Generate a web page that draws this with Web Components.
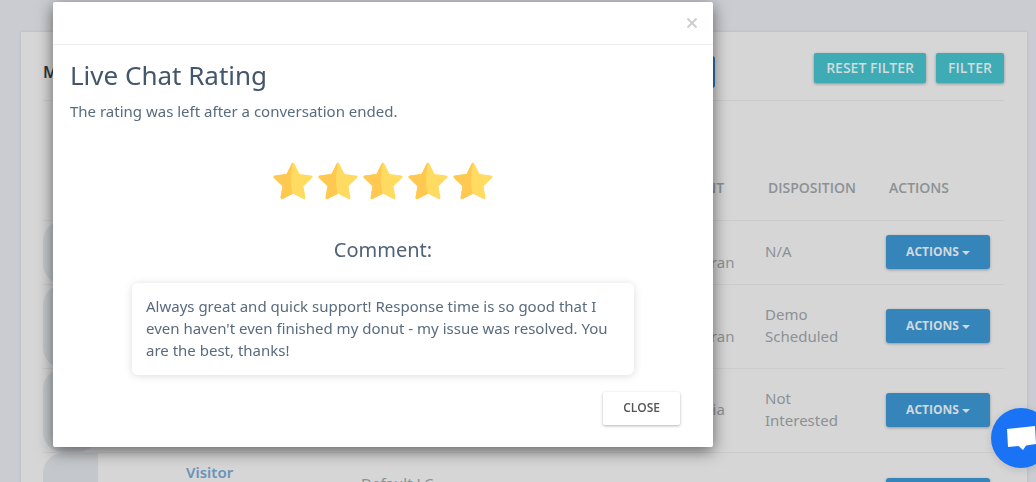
<!DOCTYPE html>
<html lang="en">
<head>
<meta charset="utf-8">
<title>Live Chat Rating</title>
<style>
body { margin: 0; min-height: 100vh; background: #cbccd1; color: #8b9195; overflow: hidden;
  font: 15px/22px "Noto Sans", "Open Sans", sans-serif; }
</style>
</head>
<body>
<conversations-page></conversations-page>
<rating-dialog heading="Live Chat Rating">
  The rating was left after a conversation ended.
  <star-rating slot="stars" value="5"></star-rating>
  <comment-card slot="comment">Always great and quick support! Response time is so good that I even haven't even finished my donut - my issue was resolved. You are the best, thanks!</comment-card>
</rating-dialog>
<chat-launcher></chat-launcher>

<script>
const define = (name, html) => customElements.define(name, class extends HTMLElement {
  connectedCallback() {
    if (this.shadowRoot) return;
    const root = this.attachShadow({ mode: "open" });
    root.innerHTML = typeof html === "function" ? html(this) : html;
  }
});

define("filter-button", `
<style>
:host { display: block; }
button { display: block; border: 0; border-radius: 2px; padding: 4px 12px; background: #3eabb5; color: #d0dcdd;
  font: 600 14px/22px "Open Sans", sans-serif; box-shadow: 0 1px 3px rgba(0,0,0,.35); }
</style>
<button type="button"><slot></slot></button>`);

define("actions-button", `
<style>
:host { display: block; }
button { display: flex; align-items: center; justify-content: center; gap: 3px; width: 104px; height: 34px; border: 0;
  border-radius: 3px; padding: 0; background: #3584ba; color: #d0d9df;
  font: 700 12px/22px "Open Sans", sans-serif; box-shadow: 0 1px 3px rgba(0,0,0,.3); }
i { border: 4px solid transparent; border-top-color: currentColor; border-bottom: 0; margin-top: 2px; }
</style>
<button type="button">ACTIONS<i></i></button>`);

const row = (cls, visitor, team, agent, disposition) => `
<tr class="${cls}"><td class="pic"><div></div></td><td>${visitor}</td><td>${team}</td>
<td>${agent}</td><td>${disposition}</td><td class="act"><actions-button></actions-button></td></tr>`;

define("conversations-page", `
<style>
:host { display: block; height: 100vh; box-sizing: border-box; overflow: hidden; padding: 32px 9px 0 21px; }
main { background: #d6d6d6; padding: 0 23px 0 22px; box-shadow: 0 0 3px rgba(0,0,0,.1); }
header { display: flex; align-items: center; gap: 10px; height: 68px; border-bottom: 1px solid #cbcbcb; }
h1 { margin: 0; width: 70px; font-size: 16px; line-height: 22px; font-weight: 600; color: #2f3439; margin-top: 11px; }
.range { flex: 0 1 592px; height: 32px; box-sizing: border-box; border: 2px solid #2c76b0; border-radius: 3px; margin-top: 12px; }
.tools { margin-left: auto; display: flex; gap: 10px; margin-top: 4px; }
table { width: 100%; border-collapse: collapse; table-layout: fixed; }
th, td { box-sizing: border-box; }
th { height: 119px; padding: 55px 0 0 11px; text-align: left; font: 600 14px/22px "Open Sans", sans-serif; }
td { padding: 0 8px 2px; }
tr { border-bottom: 1px solid #cccccc; }
tr > :nth-child(1) { width: 135px; }
tr > :nth-child(3) { width: 314px; }
tr > :nth-child(4) { width: 90px; }
tr > :nth-child(5) { width: 121px; }
tr > :nth-child(6) { width: 126px; }
tr.short td { height: 64px; }
tr.tall td { height: 84px; }
td.act { padding-bottom: 0; }
.pic div { width: 55px; height: 100%; min-height: 63px; border-radius: 20px; background: #c4c8cc; }
.tall .pic div { min-height: 83px; }
a { color: #6b93b8; font-weight: 600; text-decoration: none; }
.last td { vertical-align: top; padding-top: 8px; }
.last td:nth-child(3) { padding-top: 19px; }
.last td.act { padding-top: 25px; }
tr td.pic { padding: 0; }
.last .pic div { border-radius: 20px 0 0 20px; }
</style>
<main>
<header><h1>My</h1><div class="range"></div>
<div class="tools"><filter-button>RESET FILTER</filter-button><filter-button>FILTER</filter-button></div></header>
<table>
<thead><tr><th></th><th></th><th></th><th>AGENT</th><th>DISPOSITION</th><th>ACTIONS</th></tr></thead>
<tbody>
${row("short", "", "", "<br>Moniran", "N/A")}
${row("tall", "", "", "<br>Moniran", "Demo<br>Scheduled")}
${row("tall", "", "", "Natalia", "Not<br>Interested")}
${row("tall last", '<a href="#">Visitor</a>', "Default LC", "", "")}
</tbody></table>
</main>`);

define("star-rating", el => `
<style>
:host { display: flex; justify-content: center; gap: 5px; }
svg { display: block; width: 40px; height: 40px; }
</style>` + `<svg viewBox="0 0 40 40" aria-hidden="true">
<path fill="#ffdb61" d="M18.500 3 Q20 0 21.500 3 L26.500 13 L38 14.500 Q40.800 15.200 38.700 17.300 L30.500 25.300 L32.400 36 Q32.600 39 30 37.800 L20 32.800 L10 37.800 Q7.400 39 7.600 36 L9.500 25.300 L1.300 17.300 Q-.8 15.200 2 14.500 L13.500 13 Z"/>
<path fill="#ffc850" d="M18.500 3 Q19.200 1.500 20 1.500 Q16.500 17 19.500 33 L10 37.800 Q7.400 39 7.600 36 L9.500 25.300 L1.300 17.300 Q-.8 15.200 2 14.500 L13.500 13 Z"/>
</svg>`.repeat(Number(el.getAttribute("value"))));

define("comment-card", `
<style>
:host { display: block; border-radius: 6px; padding: 12px 14px 14px; background: #fff; box-shadow: 0 1px 8px rgba(0,0,0,.14); }
</style>
<slot></slot>`);

define("rating-dialog", el => `
<style>
:host { position: fixed; inset: 0; padding: 2px 53px; color: #596b7e; }
section { max-width: 660px; background: #fff; border-radius: 2px; box-shadow: 0 4px 16px rgba(0,0,0,.55); }
header { display: flex; justify-content: flex-end; padding: 10px 14px; border-bottom: 1px solid #eeeeee; }
header button { display: grid; place-items: center; width: 14px; height: 22px; padding: 0; border: 0; background: none; }
.body { padding: 12px 17px 0; }
h2 { margin: 0; font-size: 26px; line-height: 36px; font-weight: 400; color: #43566b; }
p { margin: 7px 0 0; }
.stars { margin-top: 39px; }
h3 { margin: 38px 0 22px; font-size: 20px; line-height: 22px; font-weight: 400; text-align: center; color: #4f6276; }
.comment { padding: 0 62px; }
footer { display: flex; justify-content: flex-end; padding: 17px 33px 22px; }
footer button { border: 0; border-radius: 2px; padding: 5px 20px 7px; background: #fff; color: #555;
  font: 600 12px/21px "Open Sans", sans-serif; box-shadow: 0 1px 3px rgba(0,0,0,.3); }
</style>
<section role="dialog" aria-label="${el.getAttribute("heading")}">
<header><button type="button" aria-label="Dismiss"><svg width="12" height="12" viewBox="0 0 12 12"><path d="M1.500 1.500 10.500 10.500M10.500 1.500 1.500 10.500" stroke="#ccc" stroke-width="1.800"/></svg></button></header>
<div class="body"><h2>${el.getAttribute("heading")}</h2><p><slot></slot></p>
<div class="stars"><slot name="stars"></slot></div>
<h3>Comment:</h3>
<div class="comment"><slot name="comment"></slot></div></div>
<footer><button type="button">CLOSE</button></footer>
</section>`);

define("chat-launcher", `
<style>
:host { position: fixed; right: -15px; bottom: 14px; }
button { display: grid; place-items: center; width: 60px; height: 60px; padding: 0; border: 0; border-radius: 50%; background: #1a73f5; box-shadow: 0 2px 8px rgba(0,0,0,.12); }
</style>
<button type="button" aria-label="Open chat"><svg width="30" height="26" viewBox="0 0 30 26"><path fill="#fff" d="M1 4 29 1 30 19 20 20.500 17 25 12.500 21 2 22Z"/></svg></button>`);
</script>
</body>
</html>
